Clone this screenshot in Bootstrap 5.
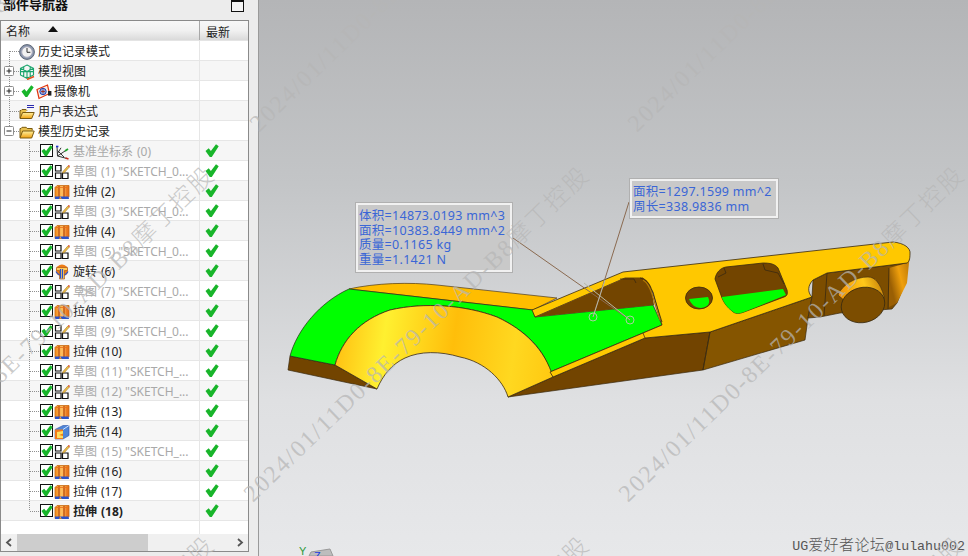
<!DOCTYPE html>
<html lang="zh-CN">
<head>
  <meta charset="UTF-8">
  <meta name="viewport" content="width=device-width, initial-scale=1.0">
  <title>部件导航器</title>
  <link href="https://cdn.jsdelivr.net/npm/bootstrap@5.3.2/dist/css/bootstrap.min.css" rel="stylesheet">
  <style>
    html, body {
      height: 556px;
      overflow: hidden;
      background: #ececec;
    }
    body {
      font-family: "Noto Sans", "Noto Sans CJK SC", sans-serif;
      font-size: 12px;
      color: #222;
    }
    .ug-shell {
      position: relative;
      width: 968px;
      height: 556px;
      overflow: hidden;
    }
    .nav-panel {
      width: 259px;
      border-right: 1px solid #9a9a9a;
      background: #ececec;
    }
    .nav-title {
      height: 20px;
      padding: 0 14px 0 3px;
    }
    .nav-title-text {
      font-size: 13px;
      font-weight: 700;
      line-height: 13px;
      margin-top: -2px;
      height: 13px;
      overflow: hidden;
      color: #111;
    }
    .restore-btn {
      width: 13px;
      height: 12px;
      border: 1px solid #111;
      border-top-width: 2px;
      background: #f4f4f4;
    }
    .tree-box {
      width: 249px;
      height: 532px;
      border: 1px solid #8a8a8a;
      background: #fff;
    }
    .tree-head {
      height: 20px;
      background: linear-gradient(#f8f8f8, #f1f1f1 50%, #dadada);
      border-bottom: 1px solid #e4e4e4;
      line-height: 19px;
    }
    .head-name {
      width: 199px;
      padding: 2px 0 0 5px;
      border-right: 1px solid #a8a8a8;
    }
    .head-new {
      padding: 2px 0 0 6px;
    }
    .sort-arrow {
      width: 0;
      height: 0;
      margin: 0 0 6px 18px;
      border-left: 5px solid transparent;
      border-right: 5px solid transparent;
      border-bottom: 6px solid #111;
    }
    .tree-row {
      height: 20px;
      border-bottom: 1px solid #e6e6e6;
      line-height: 17px;
      white-space: nowrap;
    }
    .tree-row:nth-child(even) {
      background: #f6f6f6;
    }
    .row-name {
      width: 199px;
      height: 19px;
      padding-top: 2px;
      border-right: 1px solid #e6e6e6;
      overflow: hidden;
    }
    .row-new {
      height: 19px;
      padding-left: 5px;
    }
    .tree-guide {
      margin: -2px 0 0 -1px;
      align-self: flex-start;
      flex: none;
    }
    .row-label {
      margin-left: 3px;
    }
    .row-label-cam {
      margin-left: 2px;
    }
    .row-tick {
      margin: 0 2px;
    }
    .row-num {
      margin-left: 4px;
    }
    .label-off {
      color: #a9a9a9;
    }
    .label-cur {
      font-weight: 700;
    }
    .tick-box {
      width: 13px;
      height: 13px;
      margin: 0 1px 2px 0;
      border: 1.5px solid #111;
      background: #fff;
      flex: none;
    }
    .tree-fill {
      height: 13px;
    }
    .tree-fill-name {
      width: 199px;
      border-right: 1px solid #e6e6e6;
    }
    .h-scroll {
      height: 17px;
      background: #f0f0f0;
    }
    .h-thumb {
      width: 131px;
      background: #cdcdcd;
    }
    .h-arrow {
      width: 16px;
      color: #555;
    }
    .view-pane {
      background: linear-gradient(#b4b5b7, #c3c5c7 33%, #dfe0e2 72%, #e7e8ea);
      position: relative;
    }
    .part-canvas {
      display: block;
    }
    .pmi-note {
      position: absolute;
      padding: 4px 0 0 1px;
      background: #c9c9c9;
      border: 3px solid #f1f1f1;
      outline: 1px solid #b0b0b0;
      outline-offset: -1px;
      color: #3a66d6;
      font-size: 12.5px;
      line-height: 14.7px;
      letter-spacing: .3px;
      white-space: nowrap;
    }
    .note-a {
      left: 96px;
      top: 202px;
      width: 158px;
      height: 71px;
    }
    .note-b {
      left: 370px;
      top: 178px;
      width: 150px;
      height: 41px;
    }
    .forum-tag {
      position: absolute;
      right: 3px;
      bottom: 0;
      font-family: "Noto Sans CJK SC", sans-serif;
      font-size: 15px;
      font-weight: 300;
      letter-spacing: .4px;
      line-height: 18px;
      color: #555;
      white-space: nowrap;
    }
    .forum-tag span {
      font-family: "Liberation Mono", monospace;
      font-size: 13.3px;
      letter-spacing: 0;
    }
    .stamp-layer {
      position: absolute;
      left: 0;
      top: 0;
      pointer-events: none;
    }
    .stamp-text {
      font-family: "Liberation Serif", "Noto Sans CJK SC", serif;
      font-size: 24px;
      font-weight: 300;
      fill: #b6b6b6;
      fill-opacity: .72;
    }
  </style>
</head>
<body>
  <svg width="0" height="0" class="d-block" aria-hidden="true">
    <defs>
      <linearGradient id="folderFill" x1="0" y1="0" x2="0" y2="1">
        <stop offset="0" stop-color="#fff2a0"/>
        <stop offset="1" stop-color="#f0a010"/>
      </linearGradient>
      <linearGradient id="blockFill" x1="0" y1="0" x2="1" y2="0">
        <stop offset="0" stop-color="#f28a1c"/>
        <stop offset=".5" stop-color="#ffc060"/>
        <stop offset="1" stop-color="#e4660f"/>
      </linearGradient>
      <symbol id="ic-tick" viewBox="0 0 14 14">
        <path d="M.5 7 3.700 4.300 5.900 7.100 11 .3l2.700 2L6.800 13H4.800z" fill="#18b52a"/>
      </symbol>
      <symbol id="ic-clock" viewBox="0 0 16 16">
        <circle cx="8" cy="8" r="7.400" fill="#8896ad" stroke="#5e6675"/>
        <circle cx="8" cy="8" r="5.300" fill="#f2f2f2" stroke="#aab"/>
        <path d="M8 4v4.300h3.400" fill="none" stroke="#333" stroke-width="1"/>
      </symbol>
      <symbol id="ic-view" viewBox="0 0 16 16">
        <path d="M8 1 14.500 4.300v6.700L8 14.300 1.500 11V4.300zM1.500 4.300 8 7.600l6.500-3.300M8 7.600v6.700M4.700 2.700v10M11.200 2.700v10M1.500 7.600l13 0" fill="none" stroke="#1aa46c" stroke-width="1.100"/>
        <path d="M8 15.500 15 12.500" stroke="#e8501c" stroke-width="1.600"/>
      </symbol>
      <symbol id="ic-cam" viewBox="0 0 16 16">
        <path d="M1 5.500 11.500 1l2 8.500L3 14.500z" fill="#f7efe8" stroke="#e0350f" stroke-width="1.200"/>
        <circle cx="7" cy="7.500" r="3.200" fill="#8fa8e0" stroke="#2440b0"/>
        <path d="M5 7.500h4M7 5.500v4" stroke="#a02010" stroke-width=".8"/>
        <rect x="12" y="7" width="3.400" height="4.600" fill="#222"/>
      </symbol>
      <symbol id="ic-folder" viewBox="0 0 16 16">
        <path d="M1 13.500V4.500h1L3 3.300h4.200l1 1.200h5v2" fill="#e8c04e" stroke="#7a5a10"/>
        <path d="M1 14 3.600 7h11.600l-2.500 7z" fill="url(#folderFill)" stroke="#7a5a10"/>
      </symbol>
      <symbol id="ic-expr" viewBox="0 0 16 16">
        <path d="M1 14V6.500h1L3 5.500h4l1 1" fill="#e8c04e" stroke="#7a5a10"/>
        <path d="M1 14.500 3.600 8.500h11.600l-2.500 6z" fill="url(#folderFill)" stroke="#7a5a10"/>
        <path d="M8 1.500h7M8 3.500h7" stroke="#2a2ab0" stroke-width="1.100"/>
      </symbol>
      <symbol id="ic-datum" viewBox="0 0 16 16">
        <path d="M3 2.500 3.500 12M3.500 12l9-6M3.500 12 13 14.500M3.500 6.500 10 13M3.500 9.500 7 3.800" fill="none" stroke="#333"/>
        <path d="M2 2.500h2.400" stroke="#2030d0" stroke-width="1.600"/>
        <path d="M11 7l3-2" stroke="#1fa52a" stroke-width="1.800"/>
        <path d="M11.500 14l3 1" stroke="#c8261a" stroke-width="1.600"/>
      </symbol>
      <symbol id="ic-sketch" viewBox="0 0 16 16">
        <path d="M1.500 1.500h5.500v5.500H1.500zM1.500 9h5.500v5.500H1.500zM8.500 9h5.500v5.500H8.500z" fill="#fff" stroke="#111" stroke-width="1.200"/>
        <path d="M9 7.500 14 1.800l1.400 1.200-5 5.500-1.800.6z" fill="#f1c24a" stroke="#a07020" stroke-width=".6"/>
        <path d="M14 1.800l1.400 1.200.5-1-1-1z" fill="#e0341a"/>
      </symbol>
      <symbol id="ic-extrude" viewBox="0 0 16 16">
        <path d="M1 3.500 3 1.500h12v11l-2 2H1z" fill="url(#blockFill)" stroke="#c86a10" stroke-width=".8"/>
        <path d="M5 2v12M10 2v12" stroke="#b84a0c" stroke-width="1.200"/>
        <path d="M1 3.500h12v11" fill="none" stroke="#e8701a" stroke-width=".8"/>
        <path d="M1 15h4l1-2.500 2 2.500h7l-.5-2.500H1z" fill="#2b52c8"/>
      </symbol>
      <symbol id="ic-revolve" viewBox="0 0 16 16">
        <circle cx="8" cy="6.500" r="6" fill="#ee7c18"/>
        <path d="M2.500 3.500h11v3h-3v8.500h-5V6.500h-3z" fill="#ffcb5c" stroke="#a5480c" stroke-width=".6"/>
        <path d="M6.500 5v9.500M8.500 5v9.500" stroke="#2b52c8" stroke-width="1.200"/>
        <path d="M2 7.500c1 2 2 3 3.500 3.500M14 7.500c-1 2-2 3-3.500 3.500" fill="none" stroke="#2b52c8" stroke-width="1.200"/>
      </symbol>
      <symbol id="ic-shell" viewBox="0 0 16 16">
        <path d="M1 5.500 9 1.500h6v10l-6 3.500H1z" fill="#4f86d8" stroke="#2b52a8" stroke-width=".6"/>
        <path d="M1 5.500h8v9.500H1z" fill="#f27a1a"/>
        <path d="M3 8l6-1v2.500l-4 1.500 4 1v2H3z" fill="#ffe060"/>
        <path d="M9 5.500 15 1.500" stroke="#cfe0ff"/>
      </symbol>
    </defs>
  </svg>

  <div class="ug-shell d-flex">
    <aside class="nav-panel flex-shrink-0">
      <div class="nav-title d-flex justify-content-between align-items-start">
        <div class="nav-title-text">部件导航器</div>
        <div class="restore-btn"></div>
      </div>
      <div class="tree-box d-flex flex-column">
        <div class="tree-head d-flex flex-shrink-0">
          <div class="head-name d-flex align-items-center">名称<span class="sort-arrow"></span></div>
          <div class="head-new">最新</div>
        </div>
        <div id="treeRows" class="flex-shrink-0"></div>
        <div class="tree-fill d-flex flex-shrink-0"><div class="tree-fill-name"></div></div>
        <div class="h-scroll d-flex flex-shrink-0">
          <div class="h-arrow d-flex align-items-center justify-content-center">
            <svg width="8" height="9" viewBox="0 0 8 9"><path d="M6 1 2 4.500 6 8" fill="none" stroke="currentColor" stroke-width="1.800"/></svg>
          </div>
          <div class="h-thumb"></div>
          <div class="flex-grow-1"></div>
          <div class="h-arrow d-flex align-items-center justify-content-center">
            <svg width="8" height="9" viewBox="0 0 8 9"><path d="M2 1 6 4.500 2 8" fill="none" stroke="currentColor" stroke-width="1.800"/></svg>
          </div>
        </div>
      </div>
    </aside>

    <main class="view-pane flex-grow-1">
      <svg class="part-canvas" width="709" height="556" viewBox="259 0 709 556">
        <defs>
          <linearGradient id="archFill" gradientUnits="userSpaceOnUse" x1="340" y1="340" x2="555" y2="370">
            <stop offset="0" stop-color="#ffc414"/>
            <stop offset=".2" stop-color="#fff030"/>
            <stop offset=".52" stop-color="#ffbe0a"/>
            <stop offset=".8" stop-color="#ffd820"/>
            <stop offset="1" stop-color="#ffc810"/>
          </linearGradient>
          <linearGradient id="pegFill" gradientUnits="userSpaceOnUse" x1="845" y1="300" x2="885" y2="285">
            <stop offset="0" stop-color="#f59a08"/>
            <stop offset=".55" stop-color="#ffc81a"/>
            <stop offset="1" stop-color="#c07a08"/>
          </linearGradient>
          <linearGradient id="endFill" gradientUnits="userSpaceOnUse" x1="892" y1="290" x2="912" y2="285">
            <stop offset="0" stop-color="#9a5f04"/>
            <stop offset=".55" stop-color="#f0a00c"/>
            <stop offset="1" stop-color="#c98208"/>
          </linearGradient>
        </defs>
        <g stroke-linejoin="round">
          <!-- bottom side faces -->
          <path d="M290 356 335 365 377 389 288 370Z" fill="#724400" stroke="#3a2a10" stroke-width=".7"/>
          <path d="M508 397 553 377 645 338 710 332 703 370Z" fill="#724400" stroke="#3a2a10" stroke-width=".7"/>
          <path d="M703 370 710 332 812 297 808 318 805 340Z" fill="#855500" stroke="#3a2a10" stroke-width=".7"/>
          <path d="M808 318 812 297 813 280 827 273 907 263 905 283 897 303 892 309 840 313 820 317Z" fill="#7c4d00" stroke="#3a2a10" stroke-width=".7"/>
          <path d="M889 268 907 263 910 253 907 283 897 303 889 307Z" fill="url(#endFill)"/>
          <path d="M827 273 824 316M889 268 888 309" stroke="#3a2a10" stroke-width=".8" fill="none"/>
          <!-- far rib strip on the left -->
          <path d="M349 289C375 283 410 282 437 285L557 298 533 310Z" fill="#ffbd00" stroke="#4a3a20" stroke-width=".7"/>
          <!-- green floor -->
          <path d="M349 289 533 310 535 317 653 305 662 325 643 333 550 372C545 350 525 330 497 317 465 305 425 302 390 310 360 320 342 340 335 365L290 356C297 330 320 302 349 289Z" fill="#00ff00" stroke="#2a2a1a" stroke-width=".7"/>
          <!-- arch -->
          <path d="M335 365C342 340 360 320 390 310 425 302 465 305 497 317 525 330 545 350 553 377L508 397C503 380 485 362 460 357 440 351 420 351 405 358 392 364 383 375 377 389Z" fill="url(#archFill)" stroke="#3a2a10" stroke-width=".8"/>
          <!-- slab, top face -->
          <path d="M532 310 623 272 893 242C904 243 911 248 910 254 910 259 909 262 907 263L827 273 813 280C808 285 807 292 812 297L710 332 645 338 553 377 550 372 643 333 662 325 653 292 643 278 625 278 535 317Z" fill="#ffc800" stroke="#3a2a10" stroke-width=".8"/>
          <!-- left pocket -->
          <path d="M535 317 625 278 643 278C648 280 651 286 652 292L654 305Z" fill="#734500"/>
          <path d="M620 279 634 279 636 283M640 278C648 280 651 286 653 294L662 322" fill="none" stroke="#3a2a10" stroke-width=".8"/>
          <path d="M643 280C648 283 650 288 652 294L660 320" fill="none" stroke="#b07806" stroke-width="1.200"/>
          <!-- small hole -->
          <ellipse cx="699" cy="298" rx="13.500" ry="11" fill="#734500" stroke="#3a2a10" stroke-width=".8"/>
          <path d="M689 299 708 297C711 303 708 307 701 308 695 308 691 304 689 299Z" fill="#00ff00"/>
          <!-- right pocket -->
          <path d="M715 279C716 273 720 268 726 267L763 263C770 263 775 264 778 268L787 290C788 294 787 296 784 297L744 312C739 314 735 314 732 311 727 307 724 303 722 298Z" fill="#734500" stroke="#3a2a10" stroke-width=".8"/>
          <path d="M722 297 783 289 786 295 744 312C739 314 735 314 732 311 727 307 724 303 722 298Z" fill="#00ff00"/>
          <path d="M724 268 726 273 718 277M763 264 765 270 778 273 784 284" fill="none" stroke="#3a2a10" stroke-width=".8"/>
          <!-- peg -->
          <path d="M838 295C842 285 855 277 868 277 875 277 880 283 884 296 884 305 880 316 868 321Z" fill="url(#pegFill)" stroke="#3a2a10" stroke-width=".6"/>
          <ellipse cx="863" cy="305" rx="22" ry="17.500" transform="rotate(-14 863 305)" fill="#7c4d00" stroke="#3a2a10" stroke-width=".8"/>
          <!-- edge between lower faces -->
          <path d="M645 338 643 333M710 332 703 370" stroke="#3a2a10" stroke-width=".7" fill="none"/>
        </g>
        <!-- leaders -->
        <path d="M513 238 630 320" stroke="#8a6a50" stroke-width="1" fill="none"/>
        <path d="M629 202 593 317" stroke="#8a6a50" stroke-width="1" fill="none"/>
        <path d="M584 283 630 320M605 280 593 317" stroke="#b8b8a8" stroke-width="1" fill="none"/>
        <circle cx="630" cy="320" r="4" fill="none" stroke="#a8d0a0"/>
        <circle cx="593" cy="317" r="4" fill="none" stroke="#a8d0a0"/>
        <!-- view triad -->
        <path d="M309 556 311 552 330 549 333 556Z" fill="#bdbdbd" stroke="#999"/>
        <text x="299" y="555" font-family="Liberation Sans, sans-serif" font-size="11" fill="#2f9a3c">Y</text>
        <text x="314" y="560" font-family="Liberation Sans, sans-serif" font-size="11" fill="#1c3ce0">Z</text>
      </svg>

      <div class="pmi-note note-a">体积=14873.0193 mm^3<br>面积=10383.8449 mm^2<br>质量=0.1165 kg<br>重量=1.1421 N</div>
      <div class="pmi-note note-b">面积=1297.1599 mm^2<br>周长=338.9836 mm</div>
      <div class="forum-tag"><span>UG</span>爱好者论坛<span>@lulahu002</span></div>
    </main>

    <svg id="stampLayer" class="stamp-layer" width="968" height="556"></svg>
  </div>

  <script src="https://cdn.jsdelivr.net/npm/bootstrap@5.3.2/dist/js/bootstrap.bundle.min.js"></script>
  <script>
  // top level nodes of the part navigator
  const topNodes = [
    { icon: 'clock', text: '历史记录模式', line: 'first' },
    { icon: 'view', text: '模型视图', expander: 'plus' },
    { icon: 'cam', text: '摄像机', expander: 'plus', tick: true },
    { icon: 'expr', text: '用户表达式' },
    { icon: 'folder', text: '模型历史记录', expander: 'minus', line: 'last' }
  ];

  // model history features
  const features = [
    ['datum', '基准坐标系', '(0)', 1],
    ['sketch', '草图', '(1) "SKETCH_0...', 1],
    ['extrude', '拉伸', '(2)'],
    ['sketch', '草图', '(3) "SKETCH_0...', 1],
    ['extrude', '拉伸', '(4)'],
    ['sketch', '草图', '(5) "SKETCH_0...', 1],
    ['revolve', '旋转', '(6)'],
    ['sketch', '草图', '(7) "SKETCH_0...', 1],
    ['extrude', '拉伸', '(8)'],
    ['sketch', '草图', '(9) "SKETCH_0...', 1],
    ['extrude', '拉伸', '(10)'],
    ['sketch', '草图', '(11) "SKETCH_...', 1],
    ['sketch', '草图', '(12) "SKETCH_...', 1],
    ['extrude', '拉伸', '(13)'],
    ['shell', '抽壳', '(14)'],
    ['sketch', '草图', '(15) "SKETCH_...', 1],
    ['extrude', '拉伸', '(16)'],
    ['extrude', '拉伸', '(17)'],
    ['extrude', '拉伸', '(18)', 0, 1]
  ];

  const dots = 'stroke="#8f8f8f" stroke-dasharray="1 1" shape-rendering="crispEdges"';

  function icon(name, size) {
    return `<svg width="${size}" height="${size}" class="flex-shrink-0"><use href="#ic-${name}"/></svg>`;
  }

  function topRow(node) {
    const y1 = node.line === 'first' ? 10 : 0;
    const y2 = node.line === 'last' ? 10 : 20;
    let box = '';
    if (node.expander) {
      box = '<rect x="4.500" y="5.500" width="9" height="9" rx="1" fill="#fff" stroke="#8c8c8c"/><path d="M6.500 10h5" stroke="#222"/>';
      if (node.expander === 'plus') box += '<path d="M9 7.500v5" stroke="#222"/>';
    }
    const guide = `<svg class="tree-guide" width="19" height="19"><path d="M9.500 ${y1}V${y2}M9.500 10.500H19" ${dots}/>${box}</svg>`;
    const tick = node.tick ? `<span class="row-tick d-flex">${icon('tick', 13)}</span>` : '';
    const labelClass = node.tick ? 'row-label-cam' : 'row-label';
    return `<div class="tree-row d-flex"><div class="row-name d-flex align-items-center">${guide}${tick}${icon(node.icon, 16)}<span class="${labelClass}">${node.text}</span></div><div class="row-new"></div></div>`;
  }

  function featureRow(item, idx) {
    const [ic, name, num, off, cur] = item;
    const y2 = idx === features.length - 1 ? 10 : 20;
    const guide = `<svg class="tree-guide" width="40" height="19"><path d="M29.500 0V${y2}M29.500 10.500H40" ${dots}/></svg>`;
    const cls = off ? 'label-off' : (cur ? 'label-cur' : '');
    const box = `<span class="tick-box d-flex align-items-center justify-content-center">${icon('tick', 12)}</span>`;
    return `<div class="tree-row d-flex"><div class="row-name d-flex align-items-center">${guide}${box}${icon(ic, 16)}<span class="row-label ${cls}">${name}<span class="row-num">${num}</span></span></div><div class="row-new d-flex align-items-center">${icon('tick', 14)}</div></div>`;
  }

  document.getElementById('treeRows').innerHTML =
    topNodes.map(topRow).join('') + features.map(featureRow).join('');

  // company stamp across the whole window, start points in page pixels
  const stampStarts = [
    [-122, 133], [259, 133], [637, 133],
    [-122, 503], [253, 503], [628, 503],
    [-122, 873], [253, 873], [628, 873]
  ];
  document.getElementById('stampLayer').innerHTML = stampStarts.map(([x, y]) =>
    `<text class="stamp-text" x="${x}" y="${y}" textLength="468" transform="rotate(-44 ${x} ${y})">2024/01/11D0-8E-79-10-AD-B8摩丁控股</text>`
  ).join('');
  </script>
</body>
</html>
